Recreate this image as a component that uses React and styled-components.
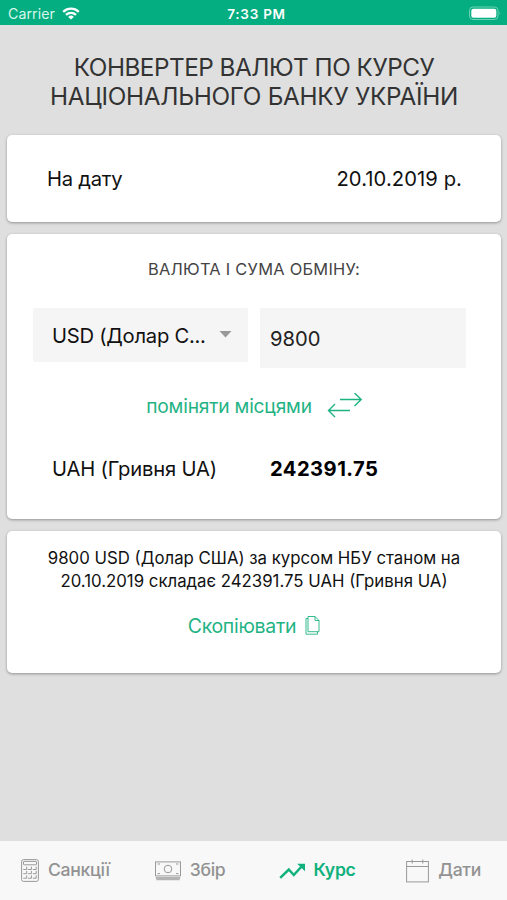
import React, { useState } from 'react';
import styled, { createGlobalStyle } from 'styled-components';

const GlobalStyle = createGlobalStyle`
  * {
    box-sizing: border-box;
  }

  body {
    margin: 0;
    font-family: Inter, "Liberation Sans", sans-serif;
    background-color: #dfdfdf;
  }

  button, input {
    font-family: inherit;
    border: none;
    padding: 0;
    outline: none;
  }
`;

const Container = styled.div`
  display: flex;
  flex-direction: column;
  height: 100vh;
  overflow: hidden;
  background-color: #dfdfdf;
  color: #111;
`;

const StatusBar = styled.header`
  display: grid;
  grid-template-columns: 1fr auto 1fr;
  align-items: center;
  flex: none;
  height: 25px;
  padding: 2px 5px 0 8px;
  background-color: #04ae80;
  color: #fff;
`;

const Carrier = styled.div`
  display: flex;
  align-items: center;
  gap: 7px;
  font-size: 14.2px;
  letter-spacing: 0.05px;
  color: #d9f6ec;
`;

const Clock = styled.div`
  padding-left: 3px;
  font-size: 13.5px;
  font-weight: 600;
  letter-spacing: 0.75px;
`;

const Battery = styled.svg`
  justify-self: end;
`;

const Content = styled.main`
  display: flex;
  flex-direction: column;
  flex: 1;
  gap: 12px;
  padding: 28px 6px 0 7px;
`;

const Title = styled.h1`
  margin: 0;
  height: 70px;
  font-size: 24.3px;
  font-weight: 430;
  line-height: 29px;
  text-align: center;
  white-space: nowrap;
  color: #333;
`;

const TitleLine = styled.span`
  display: block;
  letter-spacing: ${props => props.$spacing}px;
`;

const Card = styled.section`
  height: ${props => props.$height}px;
  background-color: #fff;
  border-radius: 5px;
  box-shadow: 0 1px 3px rgba(0, 0, 0, 0.35);
`;

const DateRow = styled.div`
  display: flex;
  align-items: center;
  justify-content: space-between;
  height: 100%;
  padding: 0 39px 0 40px;
`;

const DateText = styled.span`
  font-size: 20.2px;
  letter-spacing: ${props => props.$spacing}px;
`;

const CardTitle = styled.h2`
  margin: 0;
  padding-top: 24px;
  font-size: 16.4px;
  font-weight: 400;
  line-height: 22px;
  letter-spacing: 0.27px;
  text-align: center;
  color: #444;
`;

const Fields = styled.div`
  display: flex;
  align-items: flex-start;
  gap: 12px;
  margin-top: 28px;
  padding-left: 26px;
`;

const CurrencySelect = styled.button`
  display: flex;
  align-items: center;
  justify-content: space-between;
  width: 215px;
  height: 54px;
  padding: 0 16px 0 19px;
  background-color: #f5f5f5;
  border-radius: 2px;
  color: #111;
  font-size: 20.2px;
  letter-spacing: -0.25px;
  white-space: nowrap;
`;

const AmountInput = styled.input`
  width: 206px;
  height: 60px;
  padding: 0 10px;
  background-color: #f5f5f5;
  color: #222;
  font-size: 20.2px;
`;

const LinkButton = styled.button`
  display: flex;
  align-items: center;
  background: none;
  color: #1fb384;
  font-size: ${props => props.$size}px;
  letter-spacing: ${props => props.$spacing}px;
  line-height: 26px;
  cursor: pointer;
`;

const SwapRow = styled.div`
  display: flex;
  justify-content: center;
  margin-top: 25px;
  padding-left: 1px;
`;

const SwapIcon = styled.svg`
  margin-left: 15px;
`;

const ResultRow = styled.div`
  display: grid;
  grid-template-columns: 218px 1fr;
  margin-top: 37px;
  padding-left: 45px;
  font-size: 20.2px;
  line-height: 26px;
  letter-spacing: -0.18px;
`;

const ResultAmount = styled.strong`
  font-weight: 700;
  letter-spacing: 0.45px;
  color: #000;
`;

const Summary = styled.p`
  margin: 0;
  padding-top: 16px;
  font-size: 16.8px;
  line-height: 23px;
  letter-spacing: 0;
  text-align: center;
  white-space: nowrap;
`;

const CopyRow = styled.div`
  display: flex;
  justify-content: center;
  margin-top: 20px;
  padding-left: 1px;
`;

const CopyIcon = styled.svg`
  margin-left: 9px;
`;

const TabBar = styled.nav`
  display: flex;
  flex: none;
  height: 59px;
  background-color: #f8f8f8;
`;

const Tab = styled.button`
  display: flex;
  align-items: center;
  flex: 0 0 25%;
  gap: ${props => props.$gap}px;
  padding-left: ${props => props.$left}px;
  background: none;
  color: ${props => (props.$active ? '#10b17d' : '#929292')};
  font-size: 17.6px;
  font-weight: ${props => (props.$active ? 600 : 500)};
  letter-spacing: -0.3px;
  white-space: nowrap;
  cursor: pointer;
`;

const TabLabel = styled.span`
  padding-bottom: 2px;
`;

const WifiIcon = () => (
  <svg width="18" height="13" viewBox="0 0 18 13" fill="none" stroke="#fff" strokeWidth="2.3">
    <path d="M1.2 4.8 A11.2 11.2 0 0 1 16.8 4.8" />
    <path d="M4 7.9 A7.2 7.2 0 0 1 14 7.9" />
    <path d="M9 12.6 L6.2 9.9 A4 4 0 0 1 11.8 9.9 Z" fill="#fff" stroke="none" />
  </svg>
);

const CalculatorIcon = () => (
  <svg width="18" height="23" viewBox="0 0 18 23" fill="none" stroke="#999" strokeWidth="1">
    <rect x="0.6" y="0.6" width="16.8" height="21.8" rx="2" />
    <rect x="2.5" y="2.4" width="13" height="3.4" rx="0.6" />
    <path d="M2.3 10.5h3.4V7.7M7 10.5h3.4V7.7M11.8 10.5h3.4V7.7" />
    <path d="M2.3 14.7h3.4v-2.8M7 14.7h3.4v-2.8M11.8 14.7h3.4v-2.8" />
    <path d="M2.3 19.2h3.4v-2.9M7 19.2h3.4v-2.9M11.8 19.2h3.4v-2.9" />
  </svg>
);

const CashIcon = () => (
  <svg width="26" height="20" viewBox="0 0 26 20" fill="none" stroke="#999" strokeWidth="1">
    <rect x="0.5" y="0.9" width="25" height="14" />
    <circle cx="13" cy="8" r="3.8" />
    <path d="M2.5 3h2.5M21 3h2.5M2.5 12.6h2.5M21 12.6h2.5" />
    <path d="M0.8 16.8h24.4M1.3 18.4h23.4" strokeWidth="1.8" stroke="#b4b4b4" />
  </svg>
);

const TrendIcon = () => (
  <svg width="27" height="18" viewBox="0 0 27 18" fill="none">
    <path d="M1.2 15.9 L9.8 7.5 L14.8 13 L23 4" stroke="#10b17d" strokeWidth="2.5" />
    <path d="M18.2 1.8 H26 V9.2 Z" fill="#10b17d" />
  </svg>
);

const CalendarIcon = () => (
  <svg width="23" height="24" viewBox="0 0 23 24" fill="none" stroke="#999" strokeWidth="1">
    <rect x="0.6" y="2.5" width="21.8" height="20.4" />
    <path d="M0.6 7.5h21.8M6.2 0.5v4M16.8 0.5v4" />
  </svg>
);

const tabs = [
  { id: 'sanctions', label: 'Санкції', icon: CalculatorIcon, left: 21, gap: 9 },
  { id: 'levy', label: 'Збір', icon: CashIcon, left: 28, gap: 9 },
  { id: 'rate', label: 'Курс', icon: TrendIcon, left: 25, gap: 8 },
  { id: 'dates', label: 'Дати', icon: CalendarIcon, left: 26, gap: 9 },
];

const App = () => {
  const [amount, setAmount] = useState('9800');
  const [activeTab, setActiveTab] = useState('rate');

  return (
    <Container>
      <GlobalStyle />
      <StatusBar>
        <Carrier>Carrier <WifiIcon /></Carrier>
        <Clock>7:33 PM</Clock>
        <Battery width="34" height="16" viewBox="0 0 34 16" fill="none">
          <rect x="1.5" y="1" width="28.5" height="12.5" rx="3.5" stroke="#6fd1b3" />
          <rect x="3.3" y="2.8" width="25" height="9" rx="2" fill="#fff" />
          <path d="M31.5 5.3 Q33.3 7.3 31.5 9.3 Z" fill="#6fd1b3" />
        </Battery>
      </StatusBar>
      <Content>
        <Title>
          <TitleLine $spacing={-0.5}>КОНВЕРТЕР ВАЛЮТ ПО КУРСУ</TitleLine>
          <TitleLine $spacing={-0.28}>НАЦІОНАЛЬНОГО БАНКУ УКРАЇНИ</TitleLine>
        </Title>
        <Card $height={87}>
          <DateRow>
            <DateText $spacing={-0.25}>На дату</DateText>
            <DateText $spacing={0.08}>20.10.2019 р.</DateText>
          </DateRow>
        </Card>
        <Card $height={285}>
          <CardTitle>ВАЛЮТА І СУМА ОБМІНУ:</CardTitle>
          <Fields>
            <CurrencySelect>
              USD (Долар С...
              <svg width="13" height="8" viewBox="0 0 13 8"><path d="M0.5 0h12L6.5 6.4z" fill="#999" /></svg>
            </CurrencySelect>
            <AmountInput value={amount} onChange={(e) => setAmount(e.target.value)} />
          </Fields>
          <SwapRow>
            <LinkButton $size={19.2} $spacing={-0.2}>
              поміняти місцями
              <SwapIcon width="36" height="26" viewBox="0 0 36 26" fill="none" stroke="#1fb384" strokeWidth="1.4">
                <path d="M13 6.5h21M27.5 0l6.7 6.5l-6.7 6.5" />
                <path d="M23 17.5H1.5M8 11l-6.5 6.5L8 24" />
              </SwapIcon>
            </LinkButton>
          </SwapRow>
          <ResultRow>
            <span>UAH (Гривня UA)</span>
            <ResultAmount>242391.75</ResultAmount>
          </ResultRow>
        </Card>
        <Card $height={142}>
          <Summary>
            9800 USD (Долар США) за курсом НБУ станом на<br />
            20.10.2019 складає 242391.75 UAH (Гривня UA)
          </Summary>
          <CopyRow>
            <LinkButton $size={19.5} $spacing={-0.3}>
              Скопіювати
              <CopyIcon width="16" height="20" viewBox="0 0 16 20" fill="none" stroke="#1fb384" strokeWidth="0.9">
                <path d="M3 0.5h7l4 4v11.2H3zM10 0.5v4h4" />
                <path d="M3 2.5H1v15.7h11.5v-2.5" />
              </CopyIcon>
            </LinkButton>
          </CopyRow>
        </Card>
      </Content>
      <TabBar>
        {tabs.map(({ id, label, icon: Icon, left, gap }) => (
          <Tab key={id} $active={id === activeTab} $left={left} $gap={gap} onClick={() => setActiveTab(id)}>
            <Icon />
            <TabLabel>{label}</TabLabel>
          </Tab>
        ))}
      </TabBar>
    </Container>
  );
};

export default App;
